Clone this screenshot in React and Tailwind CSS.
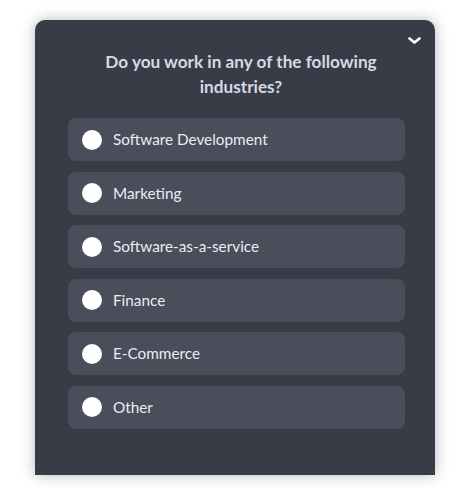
import React from "react";

const options = [
  "Software Development",
  "Marketing",
  "Software-as-a-service",
  "Finance",
  "E-Commerce",
  "Other",
];

export default function App() {
  return (
    <div className="w-[461px] h-[488px] bg-white overflow-hidden" style={{ fontFamily: "Lato, 'Noto Sans', sans-serif" }}>
      <div className="pt-[20px] pl-[35px]">
        <div className="relative w-[400px] h-[455px] bg-[#393c46] rounded-t-[10px] shadow-[0_0_14px_rgba(40,50,70,0.35)]">
          <svg className="absolute left-[373px] top-[17px]" width="13" height="8" viewBox="0 0 13 8">
            <path d="M1.5 1.5 L6.5 5.5 L11.5 1.5" fill="none" stroke="#ffffff" strokeWidth="2.6" strokeLinecap="round" strokeLinejoin="round" />
          </svg>
          <div className="pt-[29px] pl-[12px] flex flex-col items-center">
            <h1 className="text-[17.2px] font-bold leading-[25px] text-[#d3dae6] text-center w-[300px]">
              Do you work in any of the following industries?
            </h1>
          </div>
          <div className="mt-[19px] pl-[33px] pr-[30px] flex flex-col gap-[10.5px]">
            {options.map((o) => (
              <div key={o} className="h-[43px] rounded-[8px] bg-[#4a4d5a] flex items-center pl-[14px]">
                <div className="w-[20px] h-[20px] rounded-full bg-white" />
                <span className="ml-[11px] text-[15.3px] text-[#e9ecf2]">{o}</span>
              </div>
            ))}
          </div>
        </div>
      </div>
    </div>
  );
}
